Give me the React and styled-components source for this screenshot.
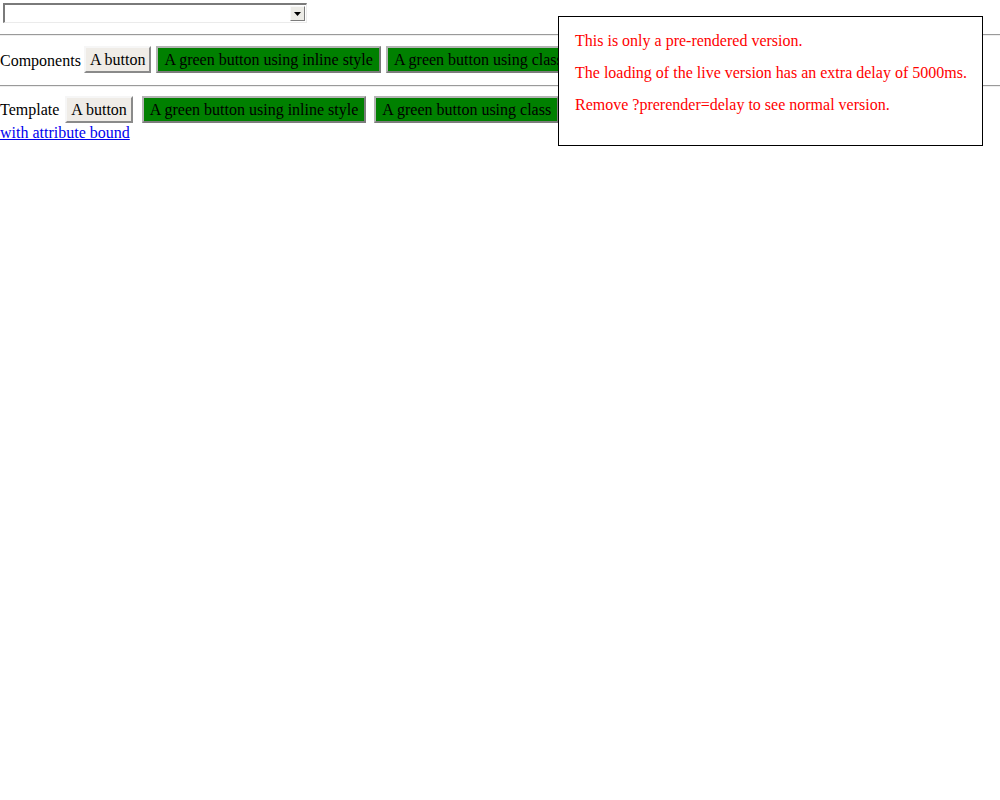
import React from "react";
import styled, { createGlobalStyle } from "styled-components";

const Global = createGlobalStyle`
  html, body { margin: 0; padding: 0; background: #fff; }
  body {
    font-family: "Liberation Serif", "Times New Roman", serif;
    font-size: 16px;
    color: #000;
  }
`;

const Page = styled.div`
  position: relative;
  width: 1000px;
  min-height: 800px;
`;

const SelectWrap = styled.div`
  padding: 3px 0 0 3px;
  height: 23px;
`;

const FakeSelect = styled.div`
  box-sizing: border-box;
  width: 304px;
  height: 20px;
  display: flex;
  justify-content: flex-end;
  align-items: center;
  padding-right: 1px;
  background: #fff;
  border-style: solid;
  border-width: 2px 1px 1px 2px;
  border-color: #7a7a7a #ebebeb #ebebeb #7a7a7a;
`;

const ArrowButton = styled.div`
  box-sizing: border-box;
  width: 15px;
  height: 15px;
  background: #ecebe6;
  border-style: solid;
  border-width: 1px;
  border-color: #f8f8f8 #7c7c7c #7c7c7c #f8f8f8;
  display: flex;
  align-items: center;
  justify-content: center;
`;

const Rule = styled.hr`
  margin: 8px 0;
  height: 0;
  border: none;
  border-top: 1px solid #9a9a9a;
  border-bottom: 1px solid #eeeeee;
`;

const Row = styled.div`
  line-height: 18px;
`;

const Label = styled.span`
  display: inline-block;
  vertical-align: top;
  line-height: ${(p) => p.$h}px;
`;

const Button = styled.button`
  font-family: "Liberation Serif", "Times New Roman", serif;
  font-size: 16px;
  line-height: 19px;
  height: 27px;
  box-sizing: border-box;
  padding: 2px ${(p) => (p.$green ? "6px" : "4px")};
  margin: ${(p) => p.$top}px 0 ${(p) => p.$bottom}px ${(p) => p.$gap}px;
  vertical-align: top;
  color: #000;
  background: ${(p) => (p.$green ? "#008000" : "#efece7")};
  border-style: solid;
  border-width: 2px;
  border-color: ${(p) =>
    p.$green
      ? "#b4b4b4 #7c7c7c #7c7c7c #b4b4b4"
      : "#f6f6f6 #8a8a8a #8a8a8a #f6f6f6"};
  cursor: default;
`;

const Link = styled.a`
  color: #0000ee;
  text-decoration: underline;
`;

const Notice = styled.div`
  position: absolute;
  left: 558px;
  top: 16px;
  width: 425px;
  height: 130px;
  box-sizing: border-box;
  border: 1px solid #000;
  background: #fff;
  padding: 14px 16px;
`;

const NoticeLine = styled.p`
  margin: 0 0 13px;
  line-height: 19px;
  color: #ff0000;
  white-space: nowrap;
`;

function Triangle() {
  return (
    <svg width="7" height="4" viewBox="0 0 7 4">
      <path d="M0 0h7L3.5 4z" fill="#000" />
    </svg>
  );
}

export default function App() {
  return (
    <Page>
      <Global />
      <SelectWrap>
        <FakeSelect>
          <ArrowButton>
            <Triangle />
          </ArrowButton>
        </FakeSelect>
      </SelectWrap>
      <Rule />
      <Row>
        <Label $h={33}>Components</Label>
        <Button $top={2} $bottom={4} $gap={3}>A button</Button>
        <Button $green $top={2} $bottom={4} $gap={5}>
          A green button using inline style
        </Button>
        <Button $green $top={2} $bottom={4} $gap={5}>
          A green button using class
        </Button>
      </Row>
      <Rule />
      <Row>
        <Label $h={29}>Template</Label>
        <Button $top={1} $bottom={1} $gap={6}>A button</Button>
        <Button $green $top={1} $bottom={1} $gap={9}>
          A green button using inline style
        </Button>
        <Button $green $top={1} $bottom={1} $gap={8}>
          A green button using class
        </Button>
        <br />
        <Link href="#">with attribute bound</Link>
      </Row>
      <Notice>
        <NoticeLine>This is only a pre-rendered version.</NoticeLine>
        <NoticeLine>
          The loading of the live version has an extra delay of 5000ms.
        </NoticeLine>
        <NoticeLine>Remove ?prerender=delay to see normal version.</NoticeLine>
      </Notice>
    </Page>
  );
}
